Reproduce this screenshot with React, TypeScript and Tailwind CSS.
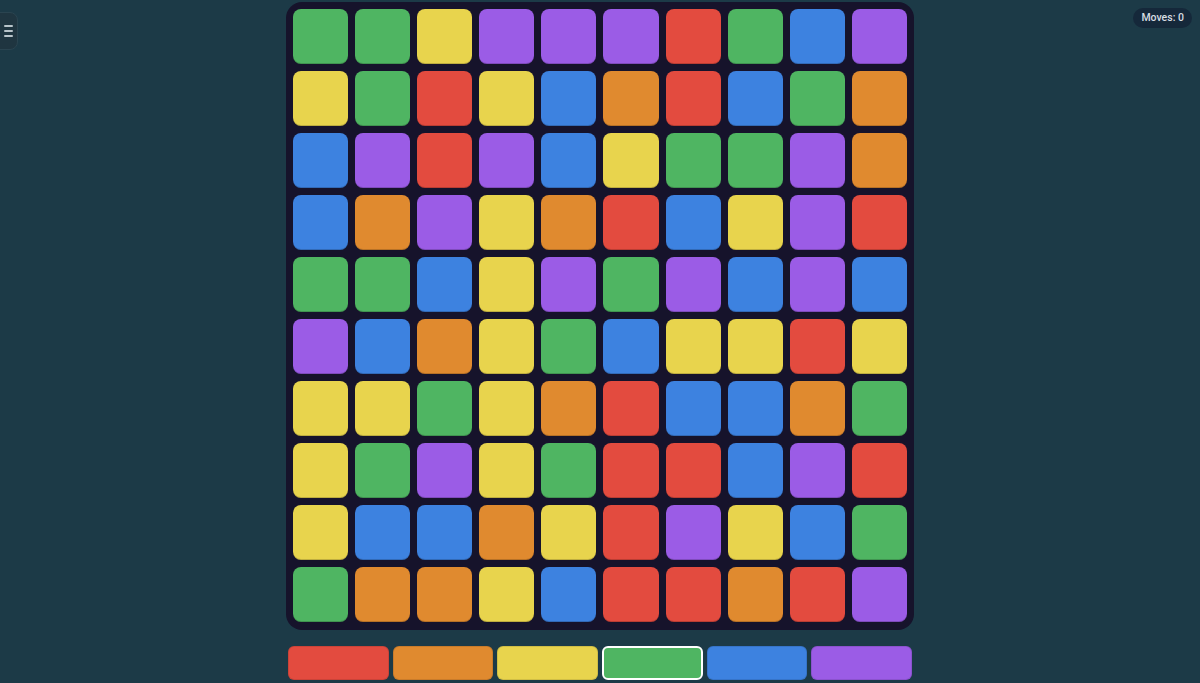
import React from "react";

// Board colours
const colors: Record<string, string> = {
  R: "bg-[#e34b3f]",
  O: "bg-[#e08a2f]",
  Y: "bg-[#e8d44d]",
  G: "bg-[#4fb562]",
  B: "bg-[#3d82e0]",
  P: "bg-[#9b5ce6]",
};

const rows = [
  "GGYPPPRGBP",
  "YGRYBORBGO",
  "BPRPBYGGPO",
  "BOPYORBYPR",
  "GGBYPGPBPB",
  "PBOYGBYYRY",
  "YYGYORBBOG",
  "YGPYGRRBPR",
  "YBBOYRPYBG",
  "GOOYBRRORP",
];

const palette = ["R", "O", "Y", "G", "B", "P"];

export default function App() {
  return (
    <main
      className="relative min-h-screen w-full bg-[#1c3a47] flex flex-col items-center pt-[2px] overflow-hidden"
      style={{ fontFamily: "Roboto, Inter, 'Noto Sans', sans-serif" }}
    >
      {/* menu toggle */}
      <button className="absolute left-[-20px] top-[12px] w-[38px] h-[38px] rounded-[8px] bg-[#1f3540] border border-[#2a4450] flex items-center justify-end pr-[4px]">
        <span className="flex flex-col gap-[3px]">
          <span className="block w-[9px] h-[2px] bg-[#b8c4ca] rounded" />
          <span className="block w-[9px] h-[2px] bg-[#b8c4ca] rounded" />
          <span className="block w-[9px] h-[2px] bg-[#b8c4ca] rounded" />
        </span>
      </button>

      {/* moves counter */}
      <div className="absolute right-[8px] top-[8px] h-[20px] px-[8px] rounded-full bg-[#15283a] flex items-center text-[10.5px] font-medium text-[#d7dde2]">
        Moves: 0
      </div>

      {/* board */}
      <div className="w-[628px] p-[7px] pb-[8px] rounded-[16px] bg-[#16132b] grid grid-cols-10 gap-[7px]">
        {rows.map((row, r) =>
          row.split("").map((c, i) => (
            <div
              key={`${r}-${i}`}
              className={`h-[55px] rounded-[8px] ${colors[c]} shadow-[inset_0_-1px_0_rgba(0,0,0,0.18)]`}
            />
          ))
        )}
      </div>

      {/* colour picker */}
      <div className="mt-[16px] w-[624px] grid grid-cols-6 gap-[4px]">
        {palette.map((c) => (
          <button
            key={c}
            className={`h-[34px] rounded-[6px] ${colors[c]} ${
              c === "G" ? "border-2 border-white" : "border border-black/10"
            }`}
          />
        ))}
      </div>
    </main>
  );
}
